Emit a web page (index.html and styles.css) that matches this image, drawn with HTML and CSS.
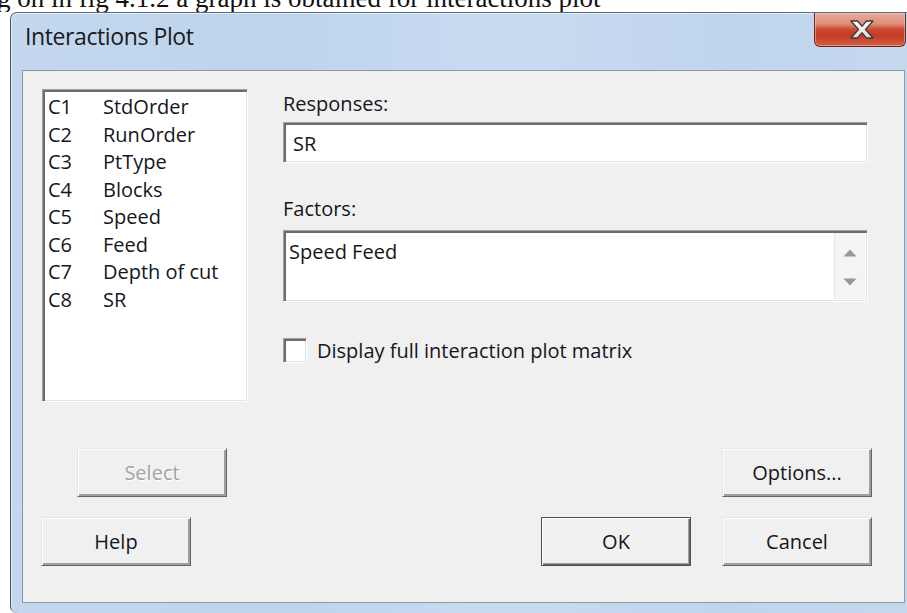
FILE: index.html
```html
<!DOCTYPE html>
<html lang="en">
<head>
<meta charset="utf-8">
<title>Interactions Plot</title>
<link rel="stylesheet" href="styles.css">
</head>
<body>
<div class="page-text"><p>g on in fig 4.1.2 a graph is obtained for interactions plot</p></div>

<div class="window">
  <div class="titlebar">
    <span class="title">Interactions Plot</span>
    <button class="close" aria-label="Close">
      <svg width="24" height="19" viewBox="0 0 24 19" aria-hidden="true">
        <defs>
          <linearGradient id="xfill" x1="0" y1="0" x2="0" y2="1">
            <stop offset="0" stop-color="#ffffff"/>
            <stop offset="1" stop-color="#dcdcdc"/>
          </linearGradient>
        </defs>
        <polygon points="1,1 7.5,1 12,6.3 16.5,1 23,1 15.5,9.5 23,18 16.5,18 12,12.7 7.5,18 1,18 8.5,9.5"
                 fill="url(#xfill)" stroke="#3c3c3c" stroke-width="1.3" stroke-linejoin="round"/>
      </svg>
    </button>
  </div>

  <div class="client">
    <div class="main">
      <ul class="columns">
        <li><span class="cid">C1</span><span>StdOrder</span></li>
        <li><span class="cid">C2</span><span>RunOrder</span></li>
        <li><span class="cid">C3</span><span>PtType</span></li>
        <li><span class="cid">C4</span><span>Blocks</span></li>
        <li><span class="cid">C5</span><span>Speed</span></li>
        <li><span class="cid">C6</span><span>Feed</span></li>
        <li><span class="cid">C7</span><span>Depth of cut</span></li>
        <li><span class="cid">C8</span><span>SR</span></li>
      </ul>

      <div class="fields">
        <div class="field-label">Responses:</div>
        <div class="textbox responses">SR</div>

        <div class="field-label factors-label">Factors:</div>
        <div class="textbox factors">
          <div class="factors-text">Speed Feed</div>
          <div class="scrollbar">
            <span class="arrow arrow-up">
              <svg width="14" height="8" viewBox="0 0 14 8" aria-hidden="true"><polygon points="7,0.5 13.5,7.5 0.5,7.5" fill="#979797"/></svg>
            </span>
            <span class="arrow arrow-down">
              <svg width="14" height="8" viewBox="0 0 14 8" aria-hidden="true"><polygon points="0.5,0.5 13.5,0.5 7,7.5" fill="#979797"/></svg>
            </span>
          </div>
        </div>

        <label class="check"><span class="checkbox"></span><span>Display full interaction plot matrix</span></label>
      </div>
    </div>

    <div class="row row-select">
      <button class="btn btn-disabled" disabled>Select</button>
      <button class="btn">Options...</button>
    </div>

    <div class="row row-actions">
      <button class="btn">Help</button>
      <span class="spacer"></span>
      <button class="btn btn-default">OK</button>
      <button class="btn btn-cancel">Cancel</button>
    </div>
  </div>
</div>
</body>
</html>
```

FILE: styles.css
```css
html, body {
  margin: 0;
  padding: 0;
}

body {
  width: 907px;
  height: 613px;
  overflow: hidden;
  background: #ffffff;
  font-family: "Open Sans", "Noto Sans", sans-serif;
  color: #16161c;
}

/* strip of document text running above the dialog */
.page-text {
  height: 12px;
  overflow: hidden;
}

.page-text p {
  margin: -15px 0 0 -3px;
  font-family: "Liberation Serif", "Times New Roman", serif;
  font-size: 27px;
  line-height: 27px;
  color: #111;
  white-space: nowrap;
}

/* dialog window frame */
.window {
  box-sizing: border-box;
  margin-left: 10px;
  width: 897px;
  height: 601px;
  border-left: 1px solid #46525f;
  border-top: 1px solid #5d6b7a;
  border-radius: 7px 0 0 7px;
  background: linear-gradient(90deg, #c3d8ee 0%, #bdd4ec 30%, #c8dcf1 55%, #bfd5ec 80%, #c4d9ee 100%);
  box-shadow: inset 1px 1px 0 rgba(255, 255, 255, 0.55);
  display: flex;
  flex-direction: column;
}

.titlebar {
  height: 57px;
  display: flex;
  align-items: flex-start;
  padding-left: 14px;
}

.title {
  margin-top: 8px;
  font-size: 23px;
  line-height: 30px;
  letter-spacing: -0.4px;
  color: #1a1a20;
}

.close {
  margin-left: auto;
  margin-right: 1px;
  width: 92px;
  height: 34px;
  padding: 0;
  box-sizing: border-box;
  border: 1px solid #6e2a1f;
  border-top: none;
  border-radius: 0 0 6px 6px;
  background: linear-gradient(180deg, #e8ab9c 0%, #df907c 32%, #cb4a31 50%, #c43a22 68%, #d2604a 100%);
  box-shadow: inset 0 0 0 1px rgba(255, 210, 200, 0.45);
  display: flex;
  align-items: center;
  justify-content: center;
}

.close svg {
  display: block;
  margin-left: 3px;
}

/* client area */
.client {
  box-sizing: border-box;
  margin-left: 11px;
  width: 883px;
  height: 533px;
  border: 1px solid #8d98a4;
  background: #f0f0f0;
}

.main {
  display: flex;
  padding: 18px 0 0 19px;
}

/* column list */
.columns {
  box-sizing: border-box;
  width: 206px;
  height: 313px;
  margin: 0;
  padding: 3px 0 0 5px;
  list-style: none;
  background: #ffffff;
  border: 1px solid;
  border-color: #a0a0a0 #ffffff #ffffff #a0a0a0;
  box-shadow: inset 2px 2px 0 #6c6c6c, inset -1px -1px 0 #e3e3e3;
  font-size: 20px;
  line-height: 27.5px;
}

.columns li {
  display: flex;
}

.cid {
  width: 55px;
  flex: none;
}

.fields {
  margin-left: 35px;
  width: 585px;
  display: flex;
  flex-direction: column;
}

.field-label {
  font-size: 20px;
  line-height: 30px;
}

.factors-label {
  margin-top: 31px;
}

.textbox {
  box-sizing: border-box;
  background: #ffffff;
  border: 1px solid;
  border-color: #a0a0a0 #ffffff #ffffff #a0a0a0;
  box-shadow: inset 2px 2px 0 #6c6c6c, inset -1px -1px 0 #e3e3e3;
  font-size: 20px;
}

.responses {
  margin-top: 3px;
  height: 41px;
  padding: 3px 8px 0 9px;
  line-height: 35px;
}

.factors {
  margin-top: 6px;
  height: 72px;
  display: flex;
  padding: 2px;
}

.factors-text {
  flex: 1;
  padding: 4px 0 0 3px;
  line-height: 30px;
}

.scrollbar {
  width: 30px;
  display: flex;
  flex-direction: column;
  background: #f4f4f4;
  border-left: 1px solid #e6e6e6;
}

.arrow {
  flex: 1;
  display: flex;
  justify-content: center;
}

.arrow-up {
  align-items: flex-start;
  padding-top: 16px;
}

.arrow-down {
  align-items: flex-end;
  padding-bottom: 13px;
}

.arrow svg {
  display: block;
}

.check {
  margin-top: 36px;
  display: flex;
  align-items: center;
  font-size: 20px;
  line-height: 24px;
}

.checkbox {
  box-sizing: border-box;
  width: 24px;
  height: 25px;
  margin-right: 10px;
  background: #ffffff;
  border: 1px solid;
  border-color: #a0a0a0 #ffffff #ffffff #a0a0a0;
  box-shadow: inset 2px 2px 0 #6c6c6c, inset -1px -1px 0 #e3e3e3;
}

/* push buttons */
.row {
  display: flex;
}

.row-select {
  margin-top: 46px;
  justify-content: space-between;
  padding: 0 32px 0 54px;
}

.row-actions {
  margin-top: 20px;
  padding: 0 32px 0 18px;
}

.spacer {
  flex: 1;
}

.btn {
  box-sizing: border-box;
  width: 150px;
  height: 49px;
  padding: 0;
  font-family: "Open Sans", "Noto Sans", sans-serif;
  font-size: 20px;
  color: #16161c;
  background: #f0f0f0;
  border: 1px solid;
  border-color: #e6e6e6 #646464 #646464 #e6e6e6;
  box-shadow: inset 1px 1px 0 #ffffff, inset -2px -2px 0 #a0a0a0;
}

.btn-disabled {
  color: #a3a3a3;
  text-shadow: 1px 1px 0 #ffffff;
}

.btn-default {
  border-color: #505050;
  box-shadow: inset 1px 1px 0 #ffffff, inset -1px -1px 0 #646464, inset -2px -2px 0 #a0a0a0;
}

.btn-cancel {
  margin-left: 31px;
}
```
